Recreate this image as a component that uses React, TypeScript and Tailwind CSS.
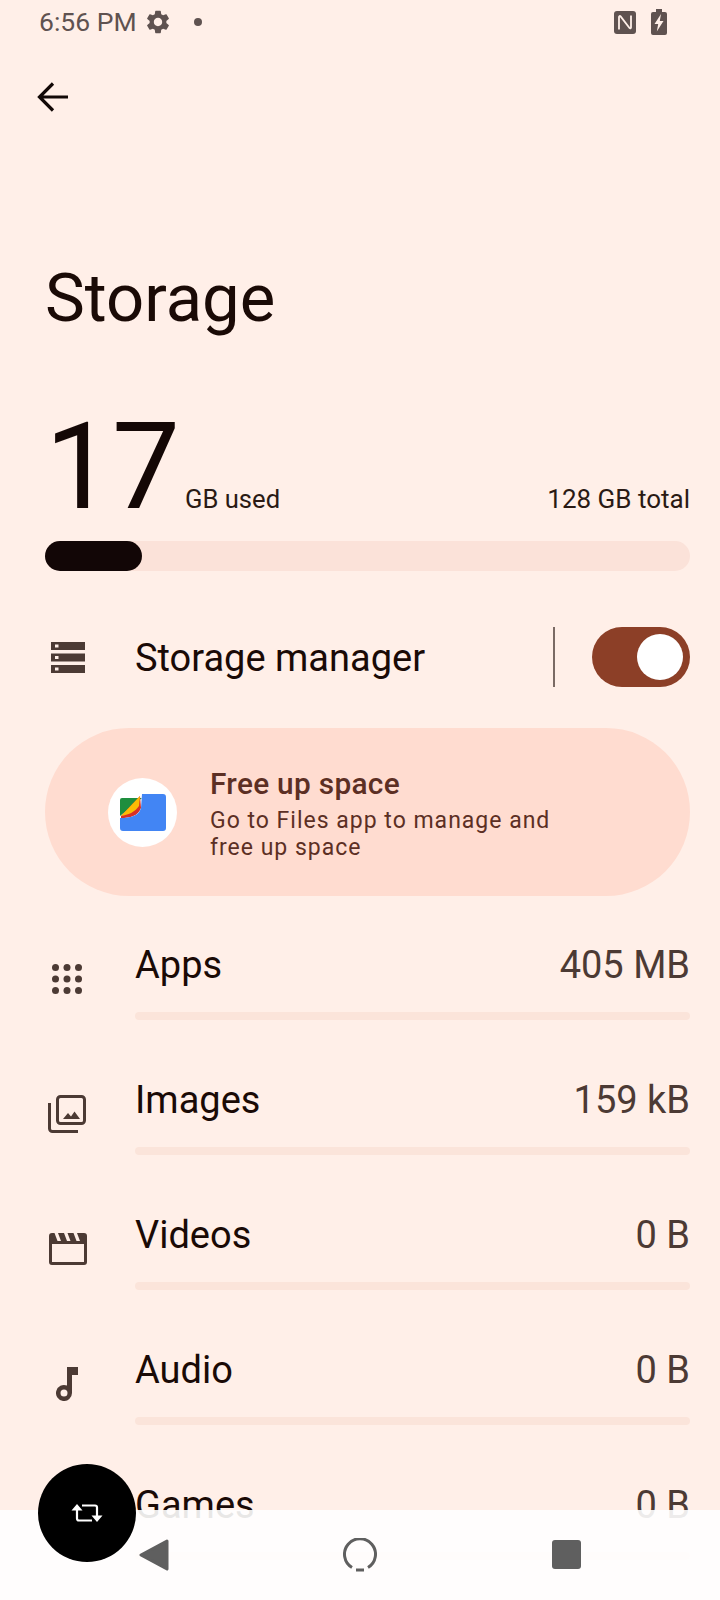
import React from 'react';

const categories = [
  { label: 'Apps', value: '405 MB', icon: <AppsIcon />, pad: 'pl-[7px]' },
  { label: 'Images', value: '159 kB', icon: <ImagesIcon />, pad: 'pl-[3px]' },
  { label: 'Videos', value: '0 B', icon: <VideosIcon />, pad: 'pl-[4px]' },
  { label: 'Audio', value: '0 B', icon: <AudioIcon />, pad: 'pl-[11px]' },
  { label: 'Games', value: '0 B', icon: null, pad: '' },
];

function GearIcon() {
  return (
    <svg viewBox="0 0 24 24" className="w-[28px] h-[28px] fill-[#5f5250]">
      <path d="M19.14 12.94c.04-.3.06-.61.06-.94 0-.32-.02-.64-.07-.94l2.03-1.58c.18-.14.23-.41.12-.61l-1.92-3.32c-.12-.22-.37-.29-.59-.22l-2.39.96c-.5-.38-1.03-.7-1.62-.94l-.36-2.54c-.04-.24-.24-.41-.48-.41h-3.84c-.24 0-.43.17-.47.41l-.36 2.54c-.59.24-1.13.57-1.62.94l-2.39-.96c-.22-.08-.47 0-.59.22L2.74 8.87c-.12.21-.08.47.12.61l2.03 1.58c-.05.3-.09.63-.09.94s.02.64.07.94l-2.03 1.58c-.18.14-.23.41-.12.61l1.92 3.32c.12.22.37.29.59.22l2.39-.96c.5.38 1.03.7 1.62.94l.36 2.54c.05.24.24.41.48.41h3.84c.24 0 .44-.17.47-.41l.36-2.54c.59-.24 1.13-.56 1.62-.94l2.39.96c.22.08.47 0 .59-.22l1.92-3.32c.12-.22.07-.47-.12-.61l-2.01-1.58zM12 15.6c-1.98 0-3.6-1.62-3.6-3.6s1.62-3.6 3.6-3.6 3.6 1.62 3.6 3.6-1.62 3.6-3.6 3.6z" />
    </svg>
  );
}

function NfcIcon() {
  return (
    <svg viewBox="0 0 22 23" className="w-[22px] h-[23px]">
      <rect width="22" height="23" rx="3" fill="#5f5250" />
      <path d="M5 18.500V6c0-1 1-1.300 1.600-.6L15.500 17c.6.7 1.500.4 1.500-.5V4.500" fill="none" stroke="#fff0e9" strokeWidth="1.800" />
    </svg>
  );
}

function BatteryIcon() {
  return (
    <svg viewBox="0 0 16 26" className="w-[16px] h-[26px]">
      <path d="M5 0h6v3h3a2 2 0 0 1 2 2v19a2 2 0 0 1-2 2H2a2 2 0 0 1-2-2V5a2 2 0 0 1 2-2h3z" fill="#5f5250" />
      <path d="M10 5 3.500 15h3.700L5.800 22.500 12.500 12H8.800z" fill="#fff0e9" />
    </svg>
  );
}

function BackIcon() {
  return (
    <svg viewBox="0 0 32 30" className="w-[32px] h-[30px]" fill="none" stroke="#120806" strokeWidth="3.200">
      <path d="M31 15H3M16 1.500 2.500 15 16 28.500" />
    </svg>
  );
}

function ManagerIcon() {
  return (
    <svg viewBox="0 0 34 31" className="w-[34px] h-[31px]">
      <path fillRule="evenodd" fill="#4c3a34" d="M0 0h34v8H0zM4 2.500v3h3.500v-3zM0 11.500h34v8H0zM4 14v3h3.500v-3zM0 23h34v8H0zM4 25.500v3h3.500v-3z" />
    </svg>
  );
}

function AppsIcon() {
  return (
    <svg viewBox="0 0 30 30" className="w-[30px] h-[30px]" fill="#4c3a34">
      {[3.500, 15, 26.500].flatMap((y) => [3.500, 15, 26.500].map((x) => <circle key={`${x}-${y}`} cx={x} cy={y} r="3.500" />))}
    </svg>
  );
}

function ImagesIcon() {
  return (
    <svg viewBox="0 0 38 38" className="w-[38px] h-[38px]">
      <rect x="9.500" y="1.500" width="27" height="27" rx="3" fill="none" stroke="#4c3a34" strokeWidth="3" />
      <path d="M1.500 8v25.500a3 3 0 0 0 3 3H30" fill="none" stroke="#4c3a34" strokeWidth="3" />
      <path d="M15 24l5-6 3 3.500 3.500-5 5.500 7.500z" fill="#4c3a34" />
    </svg>
  );
}

function VideosIcon() {
  return (
    <svg viewBox="0 0 38 32" className="w-[38px] h-[32px]">
      <path fillRule="evenodd" fill="#4c3a34" d="M3 0h2.500l3 8h3.500L9 0h6l3 8h3.500l-3-8h6l3 8H31L28 0h7a3 3 0 0 1 3 3v26a3 3 0 0 1-3 3H3a3 3 0 0 1-3-3V3a3 3 0 0 1 3-3zM3 11v18h32V11z" />
    </svg>
  );
}

function AudioIcon() {
  return (
    <svg viewBox="0 0 22 34" className="w-[22px] h-[34px]">
      <path fillRule="evenodd" fill="#4c3a34" d="M11 0h11v8h-6v18a8 8 0 1 1-5-7.400zM8 22.500a3.500 3.500 0 1 0 0 7 3.500 3.500 0 0 0 0-7z" />
    </svg>
  );
}

function FilesLogo() {
  return (
    <div className="w-[69px] h-[69px] rounded-full bg-white flex items-center justify-center shrink-0">
      <svg viewBox="0 0 46 37" className="w-[46px] h-[37px]">
        <path d="M2 4h20L0 22V6a2 2 0 0 1 2-2z" fill="#1e8e3e" />
        <path d="M1 22 20 2l1 12C18 22 10 24 1 24z" fill="#d93025" />
        <path d="M1 22 20 2l-1 10C15 18 8 21 1 22z" fill="#fbbc04" />
        <path d="M22 0h21a3 3 0 0 1 3 3v31a3 3 0 0 1-3 3H3a3 3 0 0 1-3-3V24C10 24 19 22 21 14z" fill="#4285f4" />
      </svg>
    </div>
  );
}

export default function App() {
  return (
    <div className="relative w-[720px] h-[1600px] overflow-hidden bg-[#ffefe8] font-['Roboto',sans-serif]">
      {/* Status bar */}
      <div className="flex items-center h-[44px] pl-[39px] pr-[53px] text-[#5f5250]">
        <span className="text-[26.500px] leading-none">6:56 PM</span>
        <span className="ml-[7px]"><GearIcon /></span>
        <span className="ml-[22px] w-[8px] h-[8px] rounded-full bg-[#5f5250]" />
        <div className="ml-auto flex items-center gap-[15px]">
          <NfcIcon />
          <BatteryIcon />
        </div>
      </div>

      <div className="pl-[37px] pt-[38px]">
        <BackIcon />
      </div>

      <h1 className="ml-[45px] mt-[150px] text-[67px] leading-[72px] text-[#1a0a06]">Storage</h1>

      {/* Usage summary */}
      <div className="ml-[45px] mr-[30px] mt-[73px] flex items-baseline text-[#140705]">
        <span className="text-[121px] leading-[120px] tracking-[-1px]">17</span>
        <span className="ml-[6px] text-[25.600px] text-[#2a1a14]">GB used</span>
        <span className="ml-auto text-[26px] text-[#2a1a14]">128 GB total</span>
      </div>
      <div className="ml-[45px] mr-[30px] mt-[14px] h-[30px] rounded-full bg-[#fbe2d9]">
        <div className="w-[97px] h-full rounded-full bg-[#120606]" />
      </div>

      {/* Storage manager */}
      <div className="ml-[45px] mr-[30px] mt-[56px] h-[60px] flex items-center">
        <div className="w-[90px] pl-[6px]"><ManagerIcon /></div>
        <span className="text-[38px] text-[#1a0a06] translate-y-px">Storage manager</span>
        <div className="ml-auto w-[2px] h-[60px] bg-[#7a6a64]" />
        <div className="ml-[37px] w-[98px] h-[60px] rounded-full bg-[#8c3f27] flex items-center justify-end pr-[7px]">
          <div className="w-[46px] h-[46px] rounded-full bg-white" />
        </div>
      </div>

      {/* Free up space */}
      <div className="ml-[45px] mr-[30px] mt-[41px] h-[168px] rounded-[84px] bg-[#ffdcd0] flex items-center pl-[63px]">
        <FilesLogo />
        <div className="ml-[33px] pt-[3px] text-[#5c2f24]">
          <p className="text-[29.800px] leading-[34px] font-medium tracking-[0.3px]">Free up space</p>
          <p className="mt-[6px] text-[23px] leading-[27px] tracking-[1px]">Go to Files app to manage and<br />free up space</p>
        </div>
      </div>

      {/* Categories */}
      <div className="ml-[45px] mr-[30px] mt-[26px] flex flex-col gap-[27px]">
        {categories.map((c) => (
          <div key={c.label} className="flex h-[108px] items-center">
            <div className={`w-[90px] h-full flex items-center pt-[6px] ${c.pad}`}>{c.icon}</div>
            <div className="flex-1 h-full flex flex-col">
              <div className="flex justify-between items-center h-[86px] text-[38px]">
                <span className="text-[#1a0a06]">{c.label}</span>
                <span className="text-[#4c3a34]">{c.value}</span>
              </div>
              <div className="mt-[4px] h-[8px] rounded-full bg-[#fbe4da]" />
            </div>
          </div>
        ))}
      </div>

      {/* Navigation bar */}
      <div className="absolute left-0 right-0 bottom-0 h-[90px] bg-white/90 flex items-center">
        <svg viewBox="0 0 30 32" className="absolute left-[139px] top-[29px] w-[30px] h-[32px]">
          <path d="M28 2 2 16l26 14z" fill="#5f5f5f" stroke="#5f5f5f" strokeWidth="3" strokeLinejoin="round" />
        </svg>
        <svg viewBox="0 0 34 34" className="absolute left-[343px] top-[28px] w-[34px] h-[34px]" fill="none" stroke="#5f5f5f" strokeWidth="3">
          <path d="M9 29.500A15.500 15.500 0 1 1 25 29.500" />
          <path d="M13 32h8" />
        </svg>
        <div className="absolute left-[552px] top-[30px] w-[29px] h-[29px] rounded-[3px] bg-[#5f5f5f]" />
      </div>

      {/* Floating button */}
      <div className="absolute left-[38px] top-[1464px] w-[98px] h-[98px] rounded-full bg-black flex items-center justify-center">
        <svg viewBox="0 0 32 18" className="w-[32px] h-[18px]" fill="none" stroke="#fff" strokeWidth="2.200">
          <path d="M6 6v8.500a2 2 0 0 0 2 2h13M26 12V3.500a2 2 0 0 0-2-2H11" />
          <path d="M6 0 .5 6.500h11zM26 18l5.500-6.500h-11z" fill="#fff" stroke="none" />
        </svg>
      </div>
    </div>
  );
}
